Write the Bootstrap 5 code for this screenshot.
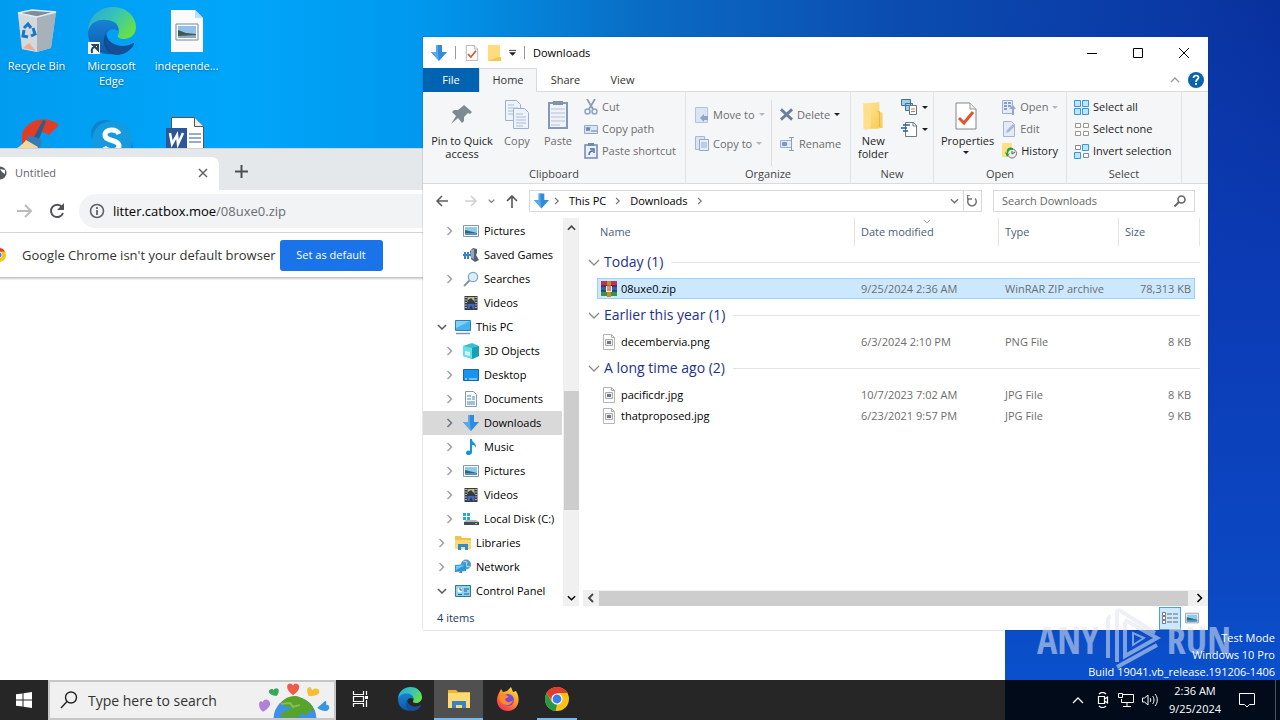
<!DOCTYPE html>
<html lang="en">
<head>
<meta charset="utf-8">
<meta name="viewport" content="width=device-width, initial-scale=1">
<title>Desktop</title>
<link href="https://cdn.jsdelivr.net/npm/bootstrap@5.3.0/dist/css/bootstrap.min.css" rel="stylesheet">
<style>
:root{--line:#dadbdc;--ink:#1e1e1e;--dim:#6d6d6d;--navy:#1e3287}
body{font-family:"Open Sans","Noto Sans",sans-serif;font-size:11px;line-height:14px;color:#000;overflow:hidden;background:#0a3fb4}
svg{display:block;flex:none}
button{font:inherit;color:inherit;background:none;border:0;padding:0}
a{color:inherit;text-decoration:none}
.desk{background:linear-gradient(90deg,#009cf0 0,#00a6fa 18%,#0098ee 33%,#0a6cc4 50%,#0b4cb0 70%,#0a38a4 92%,#08309c 100%)}
.desk-side{left:1005px;right:0;top:0;bottom:0;background:linear-gradient(180deg,transparent,#0b3ab4 40%,#0b48c2 85%,#0a50cc)}
.shortcuts{grid-template-columns:repeat(3,75px);grid-auto-rows:110px;padding-top:7px;margin-left:-1px}
.shortcuts a{color:#fff;line-height:15px;text-shadow:0 1px 2px #0007}
.shortcuts svg{margin-bottom:3px}
/* browser window */
.browser{left:-12px;top:148px;bottom:0;width:1017px;background:#fff}
.tabstrip{height:42px;padding-top:8px;background:#e5e8eb;border-top:1px solid #cfd3d8}
.btab{width:231px;height:33px;background:#fff;border-radius:0 8px 0 0;color:#5f6368;padding:0 10px 2px 5px}
.toolbar{height:43px;border-bottom:1px solid #d5d7da;padding-left:29px}
.toolbar .reload{margin:0 14px 0 16px}
.omni{height:34px;background:#f1f3f4;border-radius:17px 0 0 17px;padding-left:10px;font-size:13px}
.omni span{color:#6a6d71}
.infobar{height:45px;font-size:13px;color:#333;padding-left:4px;border-bottom:1px solid #c6c6c6;box-shadow:0 1px 2px #0003}
.infobar button{height:31px;width:103px;background:#1a73e8;color:#fff;border-radius:3px;font-size:11px}
/* file explorer window */
.explorer{left:423px;top:37px;width:785px;height:593px;background:#fff;box-shadow:0 0 1px #234a}
.titlebar{height:31px;padding:0 1px 0 8px;font-size:11px}
.vbar{width:1px;height:13px;background:#999}
.winbtn{width:46px;height:31px}
.rtabs{height:24px;border-bottom:1px solid var(--line)}
.rtabs button{height:24px;width:57px;color:#333}
.rtabs .file-tab{background:#0063b1;color:#fff;width:56px}
.rtabs .on{background:#f5f6f7;border:1px solid var(--line);border-bottom:0;width:58px}
.ribbon{height:92px;background:#f5f6f7;border-bottom:1px solid var(--line);color:var(--ink)}
.rgroup{border-right:1px solid #e2e3e4;padding:4px 3px 2px}
.rgroup footer{color:#444;text-align:center;line-height:16px}
.tools{height:70px}
.big{line-height:13px;height:66px;padding-top:3px}
.big svg{margin-bottom:3px}
.sm{gap:4px;height:22px;white-space:nowrap}
.off{color:var(--dim)}
.w-pin{width:72px}.w-copy{width:38px}.w-paste{width:44px}
.g-clip{width:263px}.g-org{width:165px}.g-new{width:83px}.g-open{width:133px}.g-sel{width:115px}
.tall .sm{height:29px}
.organizer{border-right:1px solid var(--line);width:79px;padding-left:2px}
.caret{width:0;height:0;border:3px solid transparent;border-top-color:currentColor;border-bottom:0}
.addr{height:34px;padding:0 13px 0 12px;gap:11px}
.navs{width:83px}
.path,.find{height:22px;border:1px solid #d9d9d9}
.find{width:202px}
.find input{border:0;outline:0;font:inherit;min-width:0;color:#555}
.find input::placeholder{color:#666;opacity:1}
.refresh{width:18px;height:20px;border-left:1px solid #d9d9d9}
.body-row{min-height:0}
.tree{width:140px;padding-top:1px}
.tree a{height:24px;padding-left:12px;gap:6px;white-space:nowrap}
.tree a.sub{padding-left:20px}
.tree svg+svg{margin-right:-1px}
.tree a.sel{background:#d9d9d9;margin-right:1px}
.twig{color:#a3a3a3}
.vscroll{width:16px;background:#f0f0f0;margin-right:4px;padding:6px 0 4px}
.vscroll i{height:119px;width:15px;background:#cdcdcd;margin-bottom:84px}
.hscroll{height:16px;background:#f0f0f0;padding:0 4px}
.hscroll i{height:15px;background:#cdcdcd}
.files{width:612px;margin-left:5px;table-layout:fixed;border-spacing:0;border-collapse:separate;color:var(--dim)}
.files td,.files th{padding:0 6px;white-space:nowrap}
.files thead th{height:28px;font-weight:400;color:#4c607a;border-right:1px solid #e5e5e5;position:relative}
.files thead th:first-child{border:0}
.files thead th:nth-child(2){padding-left:3px}
.files thead th:last-child,.files td:last-child{padding:0}
.files .grp th{height:32px;padding:0;font-size:14px;font-weight:400;color:var(--navy)}
.files .grp i{height:1px;background:#e2e2e2;flex:1;margin-left:8px}
.files tr.f td{height:21px}
.files tr.f td:nth-child(2){color:#000;padding-left:4px}
.files tr.f td:nth-child(5){text-align:right;padding-right:4px}
.files tr.sel td:not(:first-child):not(:last-child){background:#cce8ff;border:1px solid #99d1ff;border-width:1px 0}
.files tr.sel td:nth-child(2){box-shadow:inset 1px 0 #99d1ff}
.files tr.sel td:nth-child(5){box-shadow:inset -1px 0 #99d1ff}
.sorted{left:68px;top:1px}
.status{height:24px;padding:0 9px 0 14px;color:#1e395b}
.status .on{width:22px;height:23px;background:#cce8ff;border:1px solid #4ba0e0}
/* overlays */
.mode{right:5px;bottom:0;color:#fff;text-align:right;line-height:17px}
.mark-any{right:49px;bottom:10px;opacity:.55;color:#dfe6f2;font:300 38px/60px "Open Sans Condensed","Liberation Sans Narrow","Liberation Sans",sans-serif;gap:6px}
/* taskbar */
.taskbar{height:40px;background:linear-gradient(90deg,#262626 1005px,#020b1a 1005px);color:#fff}
.start{width:48px}
.tsearch{width:288px;height:40px;background:#f0f0f0;border:2px solid #c6c6c6;font-size:14px;padding-left:10px}
.tsearch input{border:0;outline:0;background:none;min-width:0;margin-left:10px;color:#333}
.tsearch input::placeholder{color:#333;opacity:1}
.app{width:49px;height:40px;border-bottom:2px solid transparent}
.app.run{background:#505050;border-color:#76b9ed}
.app.open{width:40px;border-color:#76b9ed;margin-left:5px}
.clock{width:64px;line-height:18px;font-size:11px}
.peek{width:5px;height:40px;border-left:1px solid #4a5363}
</style>
</head>
<body class="vh-100 d-flex flex-column">
<svg width="0" height="0" class="position-absolute" aria-hidden="true">
<defs>
<linearGradient id="eg" x1="0" y1="0" x2="1" y2=".6"><stop offset="0" stop-color="#2aa5d8"/><stop offset=".55" stop-color="#36c6b4"/><stop offset="1" stop-color="#66e04a"/></linearGradient>
<linearGradient id="eb" x1="0" y1="0" x2="0" y2="1"><stop offset="0" stop-color="#1682d6"/><stop offset="1" stop-color="#0e59a8"/></linearGradient>
<linearGradient id="ff" x1=".8" y1="0" x2=".2" y2="1"><stop offset="0" stop-color="#ffe33b"/><stop offset=".5" stop-color="#ff8a2a"/><stop offset="1" stop-color="#f5265b"/></linearGradient>
<linearGradient id="fo" x1="0" y1="0" x2="1" y2="1"><stop offset="0" stop-color="#ffe69a"/><stop offset="1" stop-color="#f5cb55"/></linearGradient>
</defs>
<symbol id="edge" viewBox="0 0 48 48"><path d="M0 25C0 10 11 0 25 0c14 0 23 10 23 20 0 8-6 12-12 12-5 0-7-2-6-4 3-4 0-12-9-12C10 16 2 20 0 25z" fill="url(#eg)"/><path d="M0 25c1-8 9-13 18-12 8 0 14 5 12 11-5-4-12-1-12 7 0 7 7 13 13 13l-4 3C12 49 0 40 0 25z" fill="url(#eb)"/><path d="M18 26c-4 8 2 16 11 17 7 1 14-2 17-6-3 6-9 10-16 11-11 0-18-12-12-22z" fill="#114a8c"/><path d="M18 26c1 8 8 13 17 13 5 0 8-2 10-3 2 0 1 2 0 3-5 7-13 9-19 8-7-4-11-13-8-21z" fill="#154f97"/></symbol>
<symbol id="chrome" viewBox="0 0 24 24"><circle cx="12" cy="12" r="12" fill="#fbc116"/><path d="M1.600 6 7 15.200 12 17.500 10.500 24A12 12 0 0 1 1.600 6z" fill="#279847"/><path d="M12 6h10.400A12 12 0 0 0 1.600 6L7 14z" fill="#e33b2e"/><circle cx="12" cy="12" r="5.600" fill="#fff"/><circle cx="12" cy="12" r="4.400" fill="#3b7ded"/></symbol>
<symbol id="down" viewBox="0 0 16 16"><path d="M5 0h6v7h5l-8 9-8-9h5z" fill="#2f8bdc"/><path d="M5 0h2v9l1 7-8-9h5z" fill="#57a7ea"/></symbol>
<symbol id="chev" viewBox="0 0 8 10"><path d="M1.500 1l4 4-4 4" fill="none" stroke="currentColor" stroke-width="1.500"/></symbol>
<symbol id="chevd" viewBox="0 0 10 8"><path d="M1 2l4 4 4-4" fill="none" stroke="currentColor" stroke-width="1.600"/></symbol>
<symbol id="pic" viewBox="0 0 16 16"><path d="M.5 2.500h15v11H.5z" fill="#fff" stroke="#8b96a0"/><path d="M2 4h12v8H2z" fill="#8ecbf2"/><path d="M2 7l4 1 8 2v2H2z" fill="#2e6a6c"/><path d="M2 10h12v2H2z" fill="#4b93c6"/></symbol>
<symbol id="video" viewBox="0 0 16 16"><path d="M1.500 1h13v14h-13z" fill="#333b45"/><path d="M4.500 2h7v5h-7z" fill="#d2bb66"/><path d="M4.500 9h7v5h-7z" fill="#4866bc"/><path d="M5 5l3-2 3 3v1H5zM6 14l2-4 2 4z" fill="#273d5c"/><path d="M3 2v12M13 2v12" stroke="#fff" stroke-width="1.200" stroke-dasharray="1 1.500"/></symbol>
<symbol id="imgfile" viewBox="0 0 14 16"><path d="M1.500.5h8l3 3v12h-11z" fill="#fff" stroke="#b5b5b5"/><path d="M9.500.5v3h3" fill="none" stroke="#aaa"/><path d="M3.500 5.500h7v6h-7z" fill="#eee" stroke="#aaa"/><path d="M5 7h4v3H5z" fill="#6b7985"/></symbol>
<symbol id="mag" viewBox="0 0 16 16"><circle cx="10" cy="6" r="4.700" fill="#d8eefb" stroke="#82a8c0" stroke-width="1.200"/><path d="M6.500 9.500 1 15" stroke="#8595a3" stroke-width="2"/></symbol>
<symbol id="props" viewBox="0 0 22 28"><path d="M1 1h14l6 6v20H1z" fill="#fff" stroke="#858585"/><path d="M15 1v6h6" fill="#eee" stroke="#999"/><path d="M4 16l5 5 9-11" fill="none" stroke="#e65228" stroke-width="3"/></symbol>
<symbol id="folder" viewBox="0 0 20 28"><path d="M1 2l15-1v9l3 1v14l-5 1H2z" fill="url(#fo)"/><path d="M1 2l7 3v19l-4 3-3-1z" fill="#ffe08a"/><path d="M14 10h2v14" fill="none" stroke="#e8b93c"/></symbol>
</svg>

<main class="desk flex-grow-1 position-relative overflow-hidden">
<div class="desk-side position-absolute"></div>
<nav class="shortcuts d-grid text-center" aria-label="Desktop">
<a href="#" class="d-flex flex-column align-items-center"><svg width="40" height="48" viewBox="0 0 40 48"><path d="M1 6 39 5 34 41 20 45 5 42z" fill="#bac5cd"/><path d="M1 6l19 4v35L5 42z" fill="#d3dade"/><path d="M20 10l19-5-5 36-14 4z" fill="#a6b1ba"/><path d="M1 6 15 3l24 2-19 5z" fill="#7d8c98" stroke="#e5eaee" stroke-width="1.500"/><path d="M7 21l4-4 3 4M16 21l2 6-4 2M11 30l-5-1 1-6" fill="none" stroke="#1976c9" stroke-width="3"/><path d="M6 41l6-5 7 8z" fill="#e9ad94"/></svg>Recycle Bin</a>
<a href="#" class="d-flex flex-column align-items-center"><svg width="48" height="48" viewBox="0 0 48 48"><use href="#edge"/><path d="M0 35h12v12H0z" fill="#f7f7f7"/><path d="M4 46c-1-5 1-6 4-6M5 38h5v5z" fill="none" stroke="#244565" stroke-width="2"/></svg>Microsoft<br>Edge</a>
<a href="#" class="d-flex flex-column align-items-center"><svg width="32" height="48" viewBox="0 0 32 48"><path d="M0 3h24l8 8v34H0z" fill="#fafafa"/><path d="M24 3v8h8z" fill="#bedcf0"/><path d="M5 17h22v16H5z" fill="#fff" stroke="#6e8799"/><path d="M7 19h18v12H7z" fill="#8fc1ec"/><path d="M7 23l8 3 10 1v4H7z" fill="#3d5c4d"/><path d="M7 29l18-1v3H7z" fill="#91a9be"/></svg>independe...</a>
<a href="#" aria-label="CCleaner" class="d-flex flex-column align-items-center"><svg width="48" height="48" viewBox="0 0 48 48"><path d="M46 8A23 22 0 0 0 9 16L9 30l20 14 14-6-7-8c-8 4-14 0-14-6 0-8 8-11 14-6z" fill="#e33c26"/><path d="M30 3l3 1-7 18-5-2z" fill="#255f96"/><path d="M16 18l13 5-2 8-14-5z" fill="#377db5"/><path d="M13 23l12 7-4 10L0 34c3-3 9-5 13-11z" fill="#f3d9a0"/></svg></a>
<a href="#" aria-label="Skype" class="d-flex flex-column align-items-center"><svg width="48" height="48" viewBox="0 0 48 48"><circle cx="17" cy="17" r="14" fill="#0d83ce"/><circle cx="31" cy="31" r="14" fill="#0d83ce"/><circle cx="24" cy="24" r="20" fill="#149ade"/><path d="M31 17c-2-5-14-6-14 1 0 7 14 4 14 11 0 6-12 6-15 1" fill="none" stroke="#fff" stroke-width="5"/></svg></a>
<a href="#" aria-label="Word document" class="d-flex flex-column align-items-center"><svg width="48" height="48" viewBox="0 0 48 48"><path d="M8.500.5h23l9 9v37h-32z" fill="#fff" stroke="#555"/><path d="M31.500.5v9h9" fill="#eee" stroke="#555"/><path d="M3 11h21v20H3z" fill="#2b579a"/><path d="M7 16l2 11 5-9 1 9 5-11" fill="none" stroke="#fff" stroke-width="2.500"/><path d="M26 17h12M26 21h12M26 25h12" stroke="#2b579a"/></svg></a>
</nav>

<section class="browser position-absolute overflow-hidden" aria-label="Browser">
<div class="tabstrip d-flex">
<div class="btab d-flex align-items-center"><svg width="14" height="14" viewBox="0 0 14 14"><circle cx="7" cy="7" r="6.500" fill="#54595e"/><path d="M7 3l5 1v4L9 6zM2 8l5 1v4z" fill="#fff"/></svg><span class="ms-2 flex-grow-1">Untitled</span><button aria-label="Close tab"><svg width="12" height="12" viewBox="0 0 12 12"><path d="M2 2l8 8M10 2l-8 8" stroke="#5f6368" stroke-width="1.500"/></svg></button></div>
<button class="ms-3 pb-1" aria-label="New tab"><svg width="13" height="13" viewBox="0 0 13 13"><path d="M6.500 0v13M0 6.500h13" stroke="#4c5054" stroke-width="2"/></svg></button>
</div>
<div class="toolbar d-flex align-items-center">
<button aria-label="Forward"><svg width="16" height="14" viewBox="0 0 16 14"><path d="M0 7h14M8 1l6 6-6 6" fill="none" stroke="#b9bbbe" stroke-width="2"/></svg></button>
<button class="reload" aria-label="Reload"><svg width="16" height="16" viewBox="0 0 16 16"><path d="M13 4a6.200 6.200 0 1 0 1 6" fill="none" stroke="#505458" stroke-width="2"/><path d="M15 0v7H8z" fill="#505458"/></svg></button>
<div class="omni d-flex align-items-center flex-grow-1"><svg class="me-2" width="16" height="16" viewBox="0 0 16 16"><circle cx="8" cy="8" r="6.500" fill="none" stroke="#5f6368" stroke-width="1.600"/><path d="M8 7v5M8 4v2" stroke="#5f6368" stroke-width="1.800"/></svg>litter.catbox.moe<span>/08uxe0.zip</span></div>
</div>
<div class="infobar d-flex align-items-center"><svg width="14" height="14"><use href="#chrome"/></svg><span class="ms-3 me-1 ps-0">Google Chrome isn't your default browser</span><button>Set as default</button></div>
</section>

<section class="explorer position-absolute d-flex flex-column" aria-label="Downloads">
<header class="titlebar d-flex align-items-center">
<svg width="16" height="16"><use href="#down"/></svg><span class="vbar ms-2 me-2"></span>
<button class="ms-0" aria-label="Properties"><svg width="16" height="16"><use href="#props"/></svg></button>
<button class="ms-2" aria-label="New folder"><svg width="13" height="16" viewBox="0 0 13 16"><path d="M0 0h12v12h1v4H0z" fill="#ffdc7c"/><path d="M10 12h3v4H0z" fill="#f2c750"/></svg></button>
<button class="ms-2" aria-label="Customize"><svg width="7" height="8" viewBox="0 0 8 8"><path d="M0 1h8" stroke="#222"/><path d="M0 3h8L4 7z" fill="#222"/></svg></button>
<span class="vbar ms-2 me-2"></span><span class="flex-grow-1">Downloads</span>
<button class="winbtn d-flex align-items-center justify-content-center" aria-label="Minimize"><svg width="10" height="10"><path d="M0 5.500h10" stroke="#000"/></svg></button>
<button class="winbtn d-flex align-items-center justify-content-center" aria-label="Maximize"><svg width="10" height="10"><path d="M.5.5h9v9h-9z" fill="none" stroke="#000"/></svg></button>
<button class="winbtn d-flex align-items-center justify-content-center" aria-label="Close"><svg width="10" height="10"><path d="M0 0l10 10M10 0L0 10" stroke="#000"/></svg></button>
</header>
<div class="rtabs d-flex align-items-center">
<button class="file-tab">File</button><button class="on">Home</button><button>Share</button><button>View</button>
<svg class="ms-auto" width="10" height="6" viewBox="0 0 10 6"><path d="M1 5l4-4 4 4" fill="none" stroke="#999" stroke-width="1.300"/></svg>
<svg class="ms-2 me-1" width="16" height="16" viewBox="0 0 16 16" role="img" aria-label="Help"><circle cx="8" cy="8" r="8" fill="#0a64ad"/><path d="M5.500 6c0-3.500 5-3 5-.5C10.500 7.500 8 7 8 10M8 11v2" fill="none" stroke="#fff" stroke-width="1.700"/></svg>
</div>
<div class="ribbon d-flex">
<div class="rgroup g-clip"><div class="tools d-flex">
<button class="big w-pin d-flex flex-column align-items-center"><svg width="32" height="32" viewBox="0 0 32 32"><path d="M18 6l8 7-2 2-2-1-4 4v4l-2 2-4-5-7 6 5-8-4-4 2-2h4l5-4z" fill="#7d8a91"/></svg>Pin to Quick access</button>
<button class="big off w-copy d-flex flex-column align-items-center"><svg width="26" height="32" viewBox="0 0 26 32"><g fill="#edf3fa" stroke="#9cb1d0"><path d="M1.500 1.500h11l4 4v16h-15z"/><path d="M9.500 9.500h11l4 4v16h-15z"/></g><path d="M4 6h6M4 9h10M4 12h5M4 15h5M12 15h7M12 18h10M12 21h10M12 24h10M12 27h7" stroke="#aabcd8"/></svg>Copy</button>
<button class="big off w-paste d-flex flex-column align-items-center"><svg width="24" height="32" viewBox="0 0 24 32"><path d="M3 4h18v25H3z" fill="#eef3fa" stroke="#8299b8" stroke-width="2"/><path d="M7 2h10v4H7z" fill="#8294a9"/><path d="M5 10h14M5 14h14M5 18h14M5 22h14M5 26h9" stroke="#b5c2d5"/></svg>Paste</button>
<div class="off ms-1">
<button class="sm d-flex align-items-center"><svg width="14" height="16" viewBox="0 0 14 16"><path d="M3 0l6 10M11 0L5 10" stroke="#8d9cb4" stroke-width="1.800"/><circle cx="3.500" cy="12.500" r="2.500" fill="none" stroke="#8da3c4" stroke-width="1.500"/><circle cx="10.500" cy="12.500" r="2.500" fill="none" stroke="#8da3c4" stroke-width="1.500"/></svg>Cut</button>
<button class="sm d-flex align-items-center"><svg width="14" height="9" viewBox="0 0 14 9"><path d="M.5.5h13v8H.5z" fill="#dce5f2" stroke="#92a8cc"/><path d="M2 2l1 4 1-4 1 4 1-4M7 6h6" fill="none" stroke="#667fb0"/></svg>Copy path</button>
<button class="sm d-flex align-items-center"><svg width="14" height="16" viewBox="0 0 14 16"><path d="M1 2h12v13H1z" fill="#e9f0fa" stroke="#7089ad" stroke-width="1.500"/><path d="M4 0h6v3H4z" fill="#7089ad"/><path d="M5 12c0-3 1-4 4-4M6 6h4v4" fill="none" stroke="#4c6da2" stroke-width="1.500"/></svg>Paste shortcut</button>
</div></div><footer>Clipboard</footer></div>

<div class="rgroup g-org"><div class="tools d-flex tall ps-1 pt-1">
<div class="organizer off">
<button class="sm d-flex align-items-center"><svg width="14" height="16" viewBox="0 0 14 16"><path d="M.5.5h12v15H.5z" fill="#dbe4f1" stroke="#b4c3da"/><path d="M13 9v4H9v2L5 11l4-4v2z" fill="#8ea3c7"/></svg>Move to<span class="caret text-black-50 opacity-50"></span></button>
<button class="sm d-flex align-items-center"><svg width="14" height="16" viewBox="0 0 14 16"><path d="M.5.5h9v13h-9z" fill="#dbe4f1" stroke="#a4b7d5"/><path d="M4.500 3.500h9v11h-9z" fill="#e8eef8" stroke="#91a9cf"/><path d="M6 7h6M6 9h6M6 11h6" stroke="#91a9cf"/></svg>Copy to<span class="caret text-black-50 opacity-50"></span></button>
</div>
<div class="ms-1 ps-1 off">
<button class="sm d-flex align-items-center"><svg width="13" height="13" viewBox="0 0 14 13"><path d="M1 1l12 11M13 1L1 12" stroke="#6d7f98" stroke-width="3"/></svg>Delete<span class="caret text-dark"></span></button>
<button class="sm d-flex align-items-center"><svg width="15" height="14" viewBox="0 0 15 14"><path d="M.5 3.500h11v7H.5z" fill="#e5ecf7" stroke="#9cafd2"/><path d="M2 5h5v4H2z" fill="#7e97c9"/><path d="M9 .5h5M9 13.500h5M11.500 0v14" stroke="#869dc8"/></svg>Rename</button>
</div></div><footer>Organize</footer></div>

<div class="rgroup g-new"><div class="tools d-flex">
<button class="big d-flex flex-column align-items-center px-1"><svg width="22" height="32" viewBox="0 -2 20 30"><use href="#folder" width="20" height="28"/></svg>New<br>folder</button>
<div class="ms-1 ps-1">
<button class="sm d-flex align-items-center" aria-label="New item"><svg width="17" height="17" viewBox="0 0 17 17"><path d="M.5.5h9v6h-9zM4.500 4.500h7v7h-7z" fill="#9cd0e8" stroke="#476e8d"/><path d="M8.500 6.500h7v9h-7z" fill="#fff" stroke="#6a7780"/><path d="M10 10h4M10 12.500h4" stroke="#cf7657"/></svg><span class="caret ms-n1"></span></button>
<button class="sm d-flex align-items-center" aria-label="Easy access"><svg width="17" height="17" viewBox="0 0 17 17"><path d="M4.500 1.500h8l3 3v11h-11z" fill="#fff" stroke="#707a83"/><path d="M12 1v4h4" fill="none" stroke="#707a83"/><path d="M2 4h7M0 7h6M2 10h5" stroke="#1f5fa8" stroke-width="1.500"/></svg><span class="caret"></span></button>
</div></div><footer>New</footer></div>

<div class="rgroup g-open"><div class="tools d-flex">
<button class="big d-flex flex-column align-items-center ps-0 ms-0 pe-1"><svg width="22" height="32" viewBox="0 -2 22 30"><use href="#props" width="22" height="28"/></svg><span class="ps-1">Properties</span><span class="caret mt-1"></span></button>
<div class="ps-1">
<button class="sm off d-flex align-items-center"><svg width="14" height="15" viewBox="0 0 14 15"><path d="M.5.5h10v13H.5z" fill="#e4ebf6" stroke="#9db1d3"/><path d="M2 3h3M2 6h3M2 9h3M6 3h3M6 6h3" stroke="#889fc8" stroke-width="2"/><path d="M10 15V9H7l4-4 3 4h-2v6z" fill="#92a8d0"/></svg>Open<span class="caret text-black-50 opacity-50"></span></button>
<button class="sm off d-flex align-items-center"><svg width="14" height="16" viewBox="0 0 14 16"><path d="M1.500.5h8l3 3v12h-11z" fill="#e4ebf6" stroke="#a3b5d3"/><path d="M4 12l1-3 6-6 2 2-6 6z" fill="#a8b8d5"/></svg>Edit</button>
<button class="sm d-flex align-items-center"><svg width="15" height="16" viewBox="0 0 15 16"><path d="M0 0h10v14H0z" fill="#ffe083"/><circle cx="10" cy="10.500" r="4.500" fill="#e9eeef" stroke="#777"/><path d="M10 8v3l3-2" fill="none" stroke="#555"/><path d="M11 5c-5-2-7 2-6 5L3 9l2 5 3-4-2 1c0-3 1-5 5-4z" fill="#23a23a"/></svg>History</button>
</div></div><footer>Open</footer></div>

<div class="rgroup g-sel"><div class="tools ps-1">
<button class="sm d-flex align-items-center"><svg width="15" height="15" viewBox="0 0 15 15"><path d="M.5.5h6v6h-6zM8.500.5h6v6h-6zM.5 8.500h6v6h-6zM8.500 8.500h6v6h-6z" fill="#c2e4fa" stroke="#319be0"/></svg>Select all</button>
<button class="sm d-flex align-items-center"><svg width="15" height="15" viewBox="0 0 15 15"><path d="M1.500 1.500h5v4h-5zM9.500 1.500h5v4h-5zM1.500 9.500h5v4h-5zM9.500 9.500h5v4h-5z" fill="#fff" stroke="#9d9490"/></svg>Select none</button>
<button class="sm d-flex align-items-center"><svg width="15" height="15" viewBox="0 0 15 15"><path d="M1.500 1.500h5v4h-5zM9.500 9.500h5v4h-5z" fill="#fff" stroke="#889"/><path d="M8.500.5h6v6h-6zM.5 8.500h6v6h-6z" fill="#c2e4fa" stroke="#319be0"/></svg>Invert selection</button>
</div><footer>Select</footer></div>
</div>

<div class="addr d-flex align-items-center">
<div class="navs d-flex align-items-center justify-content-between">
<button aria-label="Back"><svg width="14" height="12" viewBox="0 0 14 12"><path d="M13 6H2M7 1L2 6l5 5" fill="none" stroke="#5c5c5c" stroke-width="1.500"/></svg></button>
<button class="ms-1" aria-label="Forward"><svg width="14" height="12" viewBox="0 0 14 12"><path d="M1 6h11M7 1l5 5-5 5" fill="none" stroke="#cfcfcf" stroke-width="1.500"/></svg></button>
<button class="text-secondary" aria-label="Recent"><svg width="7" height="6"><use href="#chevd"/></svg></button>
<button aria-label="Up"><svg width="12" height="13" viewBox="0 0 12 13"><path d="M6 13V2M1 6l5-5 5 5" fill="none" stroke="#555" stroke-width="1.600"/></svg></button>
</div>
<div class="path d-flex align-items-center flex-grow-1 ps-1">
<svg width="15" height="16"><use href="#down"/></svg><svg class="ms-1 text-secondary" width="8" height="8"><use href="#chev"/></svg>
<a href="#" class="ms-2">This PC</a><svg class="ms-2 text-secondary" width="8" height="8"><use href="#chev"/></svg>
<a href="#" class="ms-2">Downloads</a><svg class="ms-2 text-secondary" width="8" height="8"><use href="#chev"/></svg>
<svg class="ms-auto me-1 text-secondary" width="9" height="8"><use href="#chevd"/></svg>
<button class="refresh d-flex align-items-center justify-content-center" aria-label="Refresh"><svg width="11" height="12" viewBox="0 0 11 12"><path d="M2 3.500a4.300 4.300 0 1 0 6 0M3 0H.5v4H5" fill="none" stroke="#777" stroke-width="1.500"/></svg></button>
</div>
<label class="find d-flex align-items-center px-2"><input type="text" class="flex-grow-1 p-0" placeholder="Search Downloads" aria-label="Search Downloads"><svg width="12" height="12" viewBox="0 0 12 12"><circle cx="7.500" cy="4.500" r="3.500" fill="none" stroke="#666" stroke-width="1.600"/><path d="M5 7l-4.500 4.500" stroke="#666" stroke-width="2"/></svg></label>
</div>

<div class="body-row d-flex flex-grow-1">
<nav class="tree overflow-hidden" aria-label="Folders">
<a href="#" class="sub d-flex align-items-center"><svg width="14" height="10" class="twig"><use href="#chev"/></svg><svg width="16" height="16"><use href="#pic"/></svg>Pictures</a>
<a href="#" class="sub d-flex align-items-center"><svg width="14" height="10"></svg><svg width="16" height="16" viewBox="0 0 16 16"><path d="M7 4l3-3 4 1v4l-1 2 3 5-4 2-4-3z" fill="#50606c"/><path d="M8 3l3-1v10l-3-1z" fill="#94a7b6"/><path d="M0 8h8M2 5v7M5 5v7" stroke="#3682c8" stroke-width="2"/></svg>Saved Games</a>
<a href="#" class="sub d-flex align-items-center"><svg width="14" height="10" class="twig"><use href="#chev"/></svg><svg width="16" height="16"><use href="#mag"/></svg>Searches</a>
<a href="#" class="sub d-flex align-items-center"><svg width="14" height="10"></svg><svg width="16" height="16"><use href="#video"/></svg>Videos</a>
<a href="#" class="d-flex align-items-center"><svg width="14" height="8" viewBox="0 0 14 8"><path d="M3 2l4 4 4-4" fill="none" stroke="#555" stroke-width="1.500"/></svg><svg width="16" height="16" viewBox="0 0 16 16"><path d="M.5 1.500h15v10H.5z" fill="#42b3ef" stroke="#347eaa"/><path d="M1 2h14L1 9z" fill="#80d0f8"/><path d="M1 14.500h14" stroke="#7a98ab" stroke-width="1.500"/></svg>This PC</a>
<a href="#" class="sub d-flex align-items-center"><svg width="14" height="10" class="twig"><use href="#chev"/></svg><svg width="16" height="16" viewBox="0 0 16 16"><path d="M0 3l9-3 7 3v10l-7 3-9-3z" fill="#35bfcf"/><path d="M0 3l9 2v11l-9-3z" fill="#68dde4"/><path d="M9 5l7-2v10l-7 3z" fill="#16a0b7"/><path d="M2 8l5 1v4l-5-1z" fill="#caf6f6"/></svg>3D Objects</a>
<a href="#" class="sub d-flex align-items-center"><svg width="14" height="10" class="twig"><use href="#chev"/></svg><svg width="16" height="16" viewBox="0 0 16 16"><path d="M.5 2.500h15v11H.5z" fill="#1794f0" stroke="#1166ad"/><path d="M2 12h2M6 12h8" stroke="#d7efff"/></svg>Desktop</a>
<a href="#" class="sub d-flex align-items-center"><svg width="14" height="10" class="twig"><use href="#chev"/></svg><svg width="16" height="16" viewBox="0 0 16 16"><path d="M2.500.5h8l3 3v12h-11z" fill="#fff" stroke="#8b99a5"/><path d="M4 5h4M4 8h4M9 6h3M9 8h3M4 11h8M4 13h8" stroke="#3b86bd" stroke-width="1.200"/></svg>Documents</a>
<a href="#" class="sub sel d-flex align-items-center"><svg width="14" height="10" class="text-secondary"><use href="#chev"/></svg><svg width="16" height="16"><use href="#down"/></svg>Downloads</a>
<a href="#" class="sub d-flex align-items-center"><svg width="14" height="10" class="twig"><use href="#chev"/></svg><svg width="16" height="16" viewBox="0 0 16 16"><path d="M7 0h2c0 4 5 4 4 9-1-3-2-3-4-3v7c0 4-6 4-6 1 0-2 2-3 4-2z" fill="#1593e3"/></svg>Music</a>
<a href="#" class="sub d-flex align-items-center"><svg width="14" height="10" class="twig"><use href="#chev"/></svg><svg width="16" height="16"><use href="#pic"/></svg>Pictures</a>
<a href="#" class="sub d-flex align-items-center"><svg width="14" height="10" class="twig"><use href="#chev"/></svg><svg width="16" height="16"><use href="#video"/></svg>Videos</a>
<a href="#" class="sub d-flex align-items-center"><svg width="14" height="10" class="twig"><use href="#chev"/></svg><svg width="16" height="16" viewBox="0 0 16 16"><path d="M0 2h3v3H0zM4 2h3v3H4zM0 6h3v3H0zM4 6h3v3H4z" fill="#27a6de"/><path d="M3 9h10l3 2H1z" fill="#b1babe"/><path d="M1 11h15v3H1z" fill="#434d52"/><path d="M12 12h2v1h-2z" fill="#6ef06a"/></svg>Local Disk (C:)</a>
<a href="#" class="d-flex align-items-center"><svg width="14" height="10" class="twig"><use href="#chev"/></svg><svg width="16" height="16" viewBox="0 0 16 16"><path d="M0 1h6l1 2h9v11H0z" fill="#f5c344"/><path d="M0 5h16v9H0z" fill="#fad978"/><path d="M3 15V9h10v6h-3v-3H6v3z" fill="#2c8bd2"/></svg>Libraries</a>
<a href="#" class="d-flex align-items-center"><svg width="14" height="10" class="twig"><use href="#chev"/></svg><svg width="16" height="16" viewBox="0 0 16 16"><circle cx="11" cy="5.500" r="5" fill="#529ac6"/><path d="M8 2l4 1-1 4 4 1" fill="none" stroke="#bde0f2"/><path d="M0 6l11-1v7L0 13z" fill="#2b96df"/><path d="M1 7l9-1-9 5z" fill="#74c6f5"/><path d="M5 12h2v2H4z" fill="#75838b"/></svg>Network</a>
<a href="#" class="d-flex align-items-center"><svg width="14" height="8" viewBox="0 0 14 8"><path d="M3 2l4 4 4-4" fill="none" stroke="#555" stroke-width="1.500"/></svg><svg width="16" height="16" viewBox="0 0 16 16"><path d="M.5 2.500h15v11H.5z" fill="#8ed4f1" stroke="#3a728f"/><circle cx="5" cy="7" r="2.500" fill="#fff"/><path d="M5 4.500V7h2.500M9 6h5M9 8h3M3 11.500h4M9 11h5" stroke="#195e8f" fill="none"/></svg>Control Panel</a>
</nav>
<div class="vscroll d-flex flex-column align-items-center"><svg width="9" height="8" viewBox="0 0 10 8"><path d="M1 6l4-4 4 4" fill="none" stroke="#444" stroke-width="1.800"/></svg><i class="mt-auto"></i><svg width="9" height="8"><use href="#chevd"/></svg></div>
<div class="d-flex flex-column flex-grow-1">
<table class="files">
<colgroup><col style="width:9px"><col style="width:258px"><col style="width:144px"><col style="width:120px"><col><col style="width:5px"></colgroup>
<thead><tr><th></th><th>Name</th><th>Date modified<svg class="sorted position-absolute" width="8" height="5" viewBox="0 0 10 6"><path d="M1 1l4 4 4-4" fill="none" stroke="#888"/></svg></th><th>Type</th><th class="border-0">Size</th><th></th></tr></thead>
<tbody>
<tr class="grp"><th colspan="6"><div class="d-flex align-items-center"><svg class="me-1" width="12" height="9" viewBox="0 0 12 9"><path d="M1 2l5 5 5-5" fill="none" stroke="#8a8a8a" stroke-width="1.300"/></svg>Today (1)<i></i></div></th></tr>
<tr class="f sel"><td></td><td><span class="d-flex align-items-center"><svg class="me-1" width="16" height="16" viewBox="0 0 16 16"><path d="M0 0h16v5H0z" fill="#b83452"/><path d="M0 5h16v5H0z" fill="#3260b8"/><path d="M0 10h16v5H0z" fill="#389348"/><path d="M0 5h16M0 10h16" stroke="#2b1f35"/><path d="M6 0h4v16H6z" fill="#c9892e"/><path d="M5 5h6v6H5z" fill="#f5e8ce"/><path d="M7 4v6M9 4v6" stroke="#a4402e"/></svg>08uxe0.zip</span></td><td>9/25/2024 2:36 AM</td><td>WinRAR ZIP archive</td><td>78,313 KB</td><td></td></tr>
<tr class="grp"><th colspan="6"><div class="d-flex align-items-center"><svg class="me-1" width="12" height="9" viewBox="0 0 12 9"><path d="M1 2l5 5 5-5" fill="none" stroke="#8a8a8a" stroke-width="1.300"/></svg>Earlier this year (1)<i></i></div></th></tr>
<tr class="f"><td></td><td><span class="d-flex align-items-center"><svg class="me-1" width="16" height="16"><use href="#imgfile"/></svg>decembervia.png</span></td><td>6/3/2024 2:10 PM</td><td>PNG File</td><td>8 KB</td><td></td></tr>
<tr class="grp"><th colspan="6"><div class="d-flex align-items-center"><svg class="me-1" width="12" height="9" viewBox="0 0 12 9"><path d="M1 2l5 5 5-5" fill="none" stroke="#8a8a8a" stroke-width="1.300"/></svg>A long time ago (2)<i></i></div></th></tr>
<tr class="f"><td></td><td><span class="d-flex align-items-center"><svg class="me-1" width="16" height="16"><use href="#imgfile"/></svg>pacificdr.jpg</span></td><td>10/7/2023 7:02 AM</td><td>JPG File</td><td>8 KB</td><td></td></tr>
<tr class="f"><td></td><td><span class="d-flex align-items-center"><svg class="me-1" width="16" height="16"><use href="#imgfile"/></svg>thatproposed.jpg</span></td><td>6/23/2021 9:57 PM</td><td>JPG File</td><td>9 KB</td><td></td></tr>
</tbody>
</table>
<div class="hscroll d-flex align-items-center mt-auto"><svg width="8" height="10" viewBox="0 0 8 10"><path d="M6 1L2 5l4 4" fill="none" stroke="#444" stroke-width="1.800"/></svg><i class="flex-grow-1 mx-1"></i><svg class="ms-1" width="8" height="10"><use href="#chev"/></svg></div>
</div>
</div>
<footer class="status d-flex align-items-center">4 items
<button class="on ms-auto d-flex align-items-center justify-content-center" aria-label="Details view"><svg width="16" height="14" viewBox="0 0 16 14"><path d="M.5 1.500h3v3h-3zM.5 5.500h3v3h-3zM.5 9.500h3v3h-3z" fill="#fff" stroke="#777"/><path d="M5 3h5M11 3h5M5 7h5M11 7h5M5 11h5M11 11h5" stroke="#666"/></svg></button>
<button class="ms-1" aria-label="Thumbnail view"><svg width="14" height="14"><use href="#pic"/></svg></button>
</footer>
</section>

<div class="mark-any position-absolute d-flex align-items-center">ANY<svg width="56" height="62" viewBox="0 0 56 62"><g fill="none" stroke="#dfe6f2" stroke-width="4"><path d="M12 54V5q0-4 4-2l34 22"/><path d="M3 50V12q0-3 3-4"/><path d="M20 14v34l32-18L20 12"/><path d="M12 59l40-22"/><path d="M28 25v12l11-7z" stroke-width="2"/></g></svg>RUN</div>
<div class="mode position-absolute">Test Mode<br>Windows 10 Pro<br>Build 19041.vb_release.191206-1406</div>
</main>

<footer class="taskbar d-flex align-items-center flex-shrink-0">
<button class="start d-flex justify-content-center" aria-label="Start"><svg width="16" height="16" viewBox="0 0 16 16"><path d="M0 2.300L6.500 1.400v6.100H0zM7.500 1.200L16 0v7.500H7.500zM0 8.500h6.500v6.100L0 13.700zM7.500 8.500H16V16l-8.500-1.200z" fill="#fff"/></svg></button>
<label class="tsearch d-flex align-items-center overflow-hidden"><svg width="18" height="18" viewBox="0 0 18 18"><circle cx="11" cy="6.500" r="5.500" fill="none" stroke="#222" stroke-width="1.400"/><path d="M7 10.500l-6 6.500" stroke="#222" stroke-width="1.400"/></svg><input type="text" class="flex-grow-1 p-0" placeholder="Type here to search" aria-label="Type here to search"><svg class="me-1" width="72" height="36" viewBox="0 0 74 36"><circle cx="38" cy="37" r="22" fill="#4190e8"/><path d="M24 20c6-6 14-8 21-4 6 2 12 8 13 14l-5-1-3 5-6-3-1 5H24c-2-7 8-7 12-10-5-1-9 0-12-6z" fill="#58a32c"/><path d="M24 22l9-1 3 4 7-2" stroke="#88c24c" fill="none" stroke-width="2"/><path d="M36 13C28 7 29 1 33 1q2 0 3 2 1-2 3-2c5 1 5 7-3 12z" fill="#ed5b4b"/><path d="M19 14c-9-1-9-6-6-7 2-1 3 0 3 1 1-2 3-3 5-1 1 2 0 5-2 7z" fill="#35a85c"/><path d="M52 14c-3-7-1-10 2-9l2 3c2-3 7-2 7 1 0 4-5 5-11 5z" fill="#f6bd35"/><path d="M2 27c-2-7 0-9 3-7 1-4 6-3 7 0 2 4-3 8-7 10z" fill="#b181da"/><path d="M61 26l8-7c2 0 1 3 1 4 3-1 5 4 1 6-3 1-8-1-10-3z" fill="#3498e1"/></svg></label>
<button class="app d-flex align-items-center justify-content-center" aria-label="Task view"><svg width="17" height="16" viewBox="0 0 17 16"><path d="M1.500 0v3.500h10V0M1.500 16v-3.500h10V16M1.500 5.500h10v5h-10zM14.500 0v4M14.500 9v7" fill="none" stroke="#fff" stroke-width="1.200"/><path d="M13 5h3v3h-3z" fill="#fff"/></svg></button>
<button class="app d-flex align-items-center justify-content-center" aria-label="Edge"><svg width="24" height="24"><use href="#edge"/></svg></button>
<button class="app run d-flex align-items-center justify-content-center" aria-label="File Explorer"><svg width="22" height="18" viewBox="0 0 22 18"><path d="M0 0h8l2 2h12v16H0z" fill="#f1b42d"/><path d="M0 3h22v15H0z" fill="#ffda73"/><path d="M4 18v-7h14v7h-4v-3H8v3z" fill="#3584c5"/></svg></button>
<button class="app d-flex align-items-center justify-content-center" aria-label="Firefox"><svg width="24" height="24" viewBox="0 0 24 24"><path d="M3 6l2-4 2 3 4-1 4-4 2 5 3-1c6 10 1 20-8 20S-2 15 3 6z" fill="url(#ff)"/><circle cx="12" cy="13" r="6" fill="#7848d8"/><path d="M4 8c4-2 7 0 9 2-2 0-2 1-4 2 1 4 5 4 8 1-1 5-7 7-11 3-2-2-3-5-2-8z" fill="#ff8b25"/></svg></button>
<button class="app open d-flex align-items-center justify-content-center" aria-label="Chrome"><svg width="24" height="24"><use href="#chrome"/></svg></button>
<div class="ms-auto d-flex align-items-center">
<svg class="me-2" width="12" height="8" viewBox="0 0 12 8"><path d="M1 7l5-5 5 5" fill="none" stroke="#fff" stroke-width="1.300"/></svg>
<svg class="ms-1 me-2" width="14" height="16" viewBox="0 0 14 16"><path d="M2.500 4.500h6v7h-6zM8.500 7l3-2v6l-3-2M3 2c2-2 5-2 7 0M3 14c2 2 5 2 7 0" fill="none" stroke="#fff" stroke-width="1.200"/></svg>
<svg class="me-2" width="16" height="16" viewBox="0 0 16 16"><path d="M4 2.500h11.500v8H3.500V7M.5 1.500h4v4h-4zM9 11v3.500M5 14.500h8" fill="none" stroke="#fff"/></svg>
<svg class="me-1" width="17" height="14" viewBox="0 0 17 14"><path d="M.5 5h2L6 2v10L2.500 9h-2zM8 5c1 1 1 3 0 4M10.500 3c2 2 2 6 0 8M13 1c3 3 3 9 0 12" fill="none" stroke="#fff"/></svg>
<div class="clock text-center">2:36 AM<br>9/25/2024</div>
<button class="ms-2 me-3 ps-1" aria-label="Notifications"><svg width="16" height="16" viewBox="0 0 16 16"><path d="M.5 1.500h15v11h-5L8 15l-2.500-2.500h-5z" fill="none" stroke="#fff"/></svg></button>
<span class="peek ms-1"></span>
</div>
</footer>
<script src="https://cdn.jsdelivr.net/npm/bootstrap@5.3.0/dist/js/bootstrap.bundle.min.js"></script>
</body>
</html>
